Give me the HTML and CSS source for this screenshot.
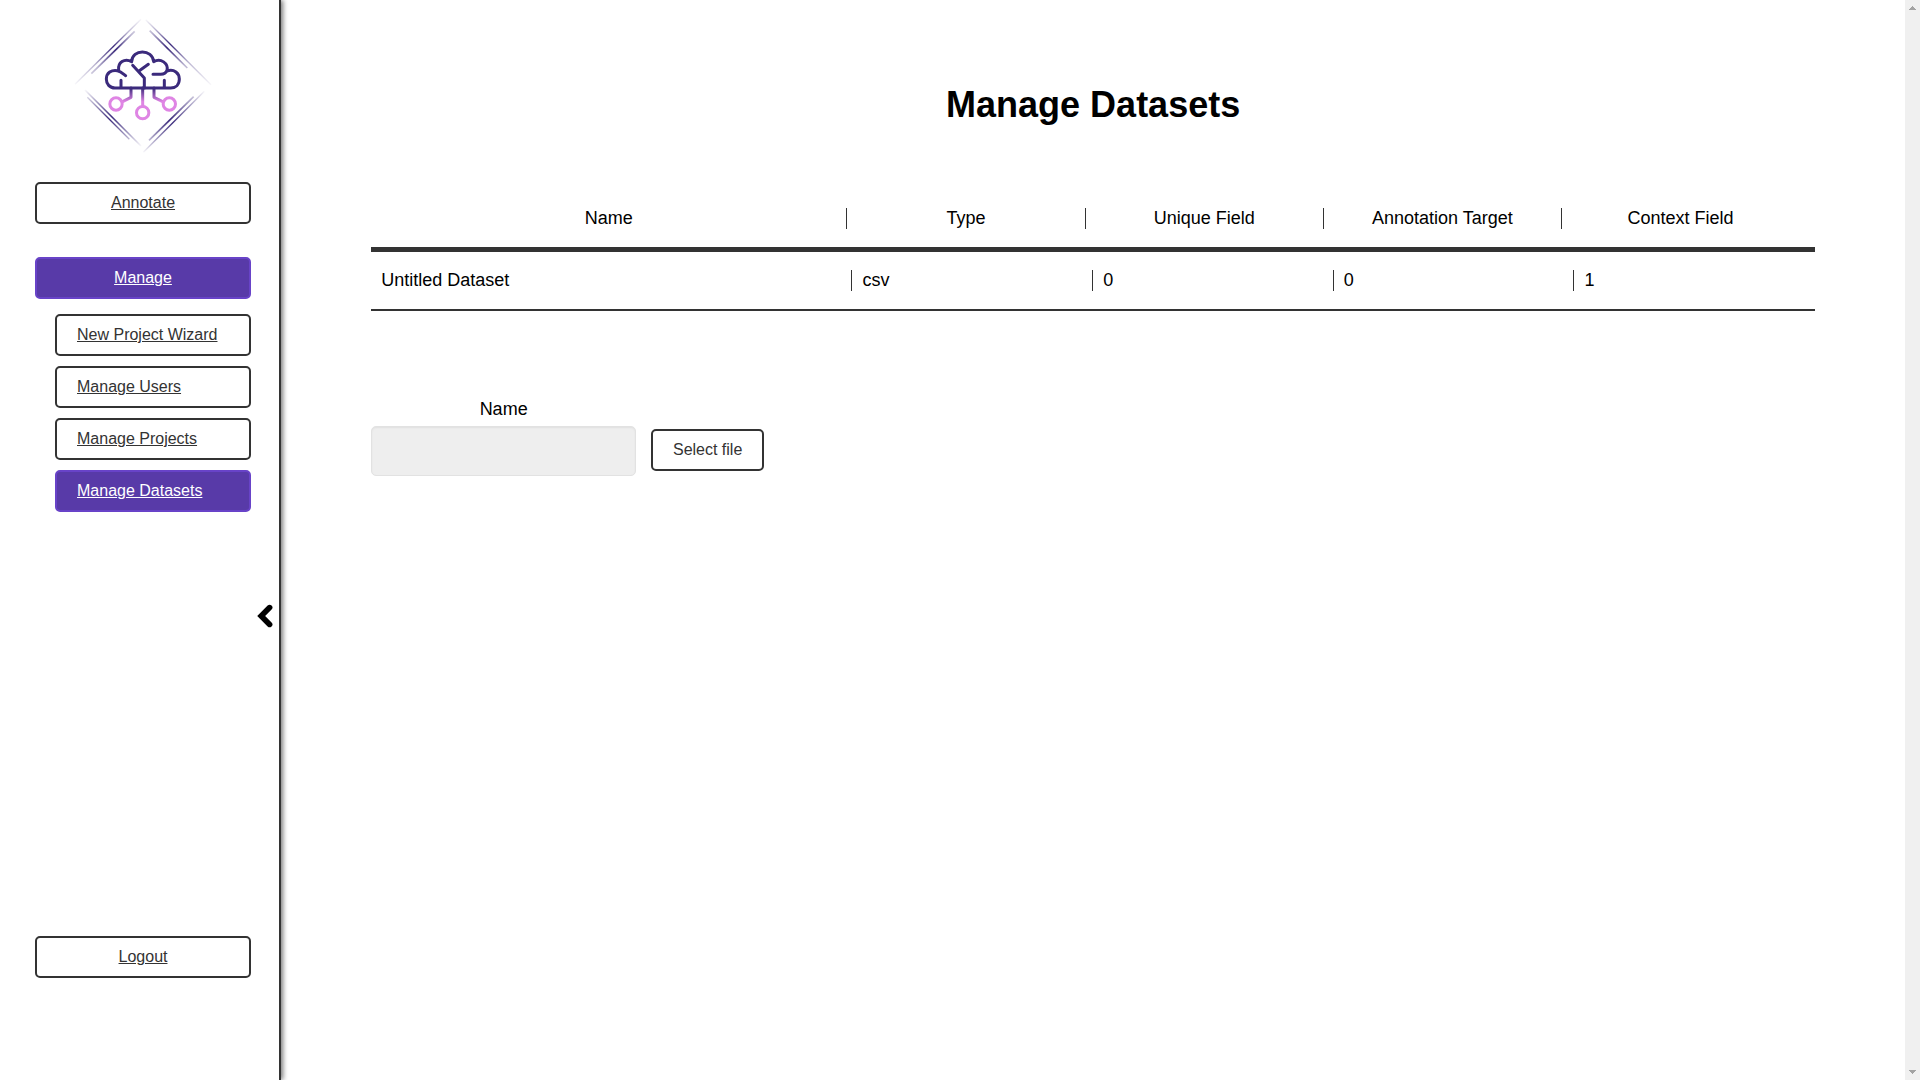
FILE: index.html
```html
<!DOCTYPE html>
<html lang="en">
<head>
<meta charset="utf-8">
<title>Manage Datasets</title>
<link rel="stylesheet" href="styles.css">
</head>
<body>
<div class="app">
  <aside class="sidebar">
    <svg class="logo" viewBox="0 0 510 450" fill="none" stroke-linecap="round" stroke-linejoin="round">
      <defs>
        <linearGradient id="up" gradientUnits="userSpaceOnUse" x1="45" y1="223" x2="243" y2="28"><stop offset="0" stop-color="#3b2a7c" stop-opacity=".04"/><stop offset=".3" stop-color="#3b2a7c" stop-opacity=".35"/><stop offset=".58" stop-color="#3b2a7c"/><stop offset=".8" stop-color="#3b2a7c" stop-opacity=".35"/><stop offset="1" stop-color="#3b2a7c" stop-opacity=".04"/></linearGradient>
        <linearGradient id="down" gradientUnits="userSpaceOnUse" x1="257" y1="29" x2="453" y2="224"><stop offset="0" stop-color="#3b2a7c" stop-opacity=".04"/><stop offset=".15" stop-color="#3b2a7c" stop-opacity=".35"/><stop offset=".38" stop-color="#3b2a7c"/><stop offset=".65" stop-color="#3b2a7c" stop-opacity=".35"/><stop offset="1" stop-color="#3b2a7c" stop-opacity=".04"/></linearGradient>
        <linearGradient id="low" gradientUnits="userSpaceOnUse" x1="75" y1="240" x2="243" y2="408"><stop offset="0" stop-color="#3b2a7c" stop-opacity=".04"/><stop offset=".48" stop-color="#3b2a7c"/><stop offset="1" stop-color="#3b2a7c" stop-opacity=".04"/></linearGradient>
        <linearGradient id="rise" gradientUnits="userSpaceOnUse" x1="250" y1="427" x2="433" y2="244"><stop offset="0" stop-color="#3b2a7c" stop-opacity=".04"/><stop offset=".48" stop-color="#3b2a7c"/><stop offset="1" stop-color="#3b2a7c" stop-opacity=".04"/></linearGradient>
        <linearGradient id="stem" gradientUnits="userSpaceOnUse" x1="0" y1="234" x2="0" y2="275"><stop offset="0" stop-color="#3b2a7c"/><stop offset="1" stop-color="#df85e4"/></linearGradient>
      </defs>
      <g stroke-width="4" stroke-linecap="butt">
        <path stroke="url(#up)" d="M45 223 243 28"/><path stroke="url(#up)" stroke-width="5" d="M94 191 224 64"/>
        <path stroke="url(#down)" d="M257 29 453 224"/><path stroke="url(#down)" stroke-width="5" d="M269 62 382 174"/>
        <path stroke="url(#low)" stroke-width="5" d="M75 240 243 408"/><path stroke="url(#low)" d="M82 262 208 388"/>
        <path stroke="url(#rise)" d="M250 427 433 244"/><path stroke="url(#rise)" stroke-width="5" d="M267 391 401 260"/>
      </g>
      <g stroke="url(#stem)" stroke-width="9">
        <path d="M213 234V262L188 275"/><path d="M248 234V286H249"/><path d="M282 234V262L308 275"/>
      </g>
      <g stroke="#df85e4" stroke-width="9">
        <circle cx="168" cy="282" r="18.500"/><circle cx="248" cy="308" r="18.500"/><circle cx="328" cy="282" r="18.500"/>
      </g>
      <g stroke="#3b2a7c" stroke-width="9">
        <path d="M165 234C149 234 139 222 139 207C139 188 155 179 172 182C183 184 190 192 197 197M176 180C173 158 193 143 215 155C216 116 278 116 281 155C302 143 326 160 321 181C318 190 311 193 302 193H279M321 183C343 176 358 190 358 207C358 224 347 234 332 234H165"/>
        <path d="M218 166 253 204V234M238 182 265 163M183 211V232M313 211V232"/>
      </g>
    </svg>
    <nav class="nav">
      <a class="btn" href="#">Annotate</a>
      <div class="group">
        <a class="btn active" href="#">Manage</a>
        <div class="subnav">
          <a class="btn sub" href="#">New Project Wizard</a>
          <a class="btn sub" href="#">Manage Users</a>
          <a class="btn sub" href="#">Manage Projects</a>
          <a class="btn sub active" href="#">Manage Datasets</a>
        </div>
      </div>
    </nav>
    <a class="btn logout" href="#">Logout</a>
    <svg class="collapse" viewBox="0 0 16 24"><path d="M12.600 3.600 4.200 12l8.400 8.400" fill="none" stroke="#000" stroke-width="5.600" stroke-linecap="round"/></svg>
  </aside>
  <main class="main">
    <h1 class="title">Manage Datasets</h1>
    <section class="table">
      <div class="row head">
        <div class="cell wide">Name</div><div class="cell">Type</div><div class="cell">Unique Field</div><div class="cell">Annotation Target</div><div class="cell">Context Field</div>
      </div>
      <div class="row data">
        <div class="cell wide">Untitled Dataset</div><div class="cell">csv</div><div class="cell">0</div><div class="cell">0</div><div class="cell">1</div>
      </div>
    </section>
    <form class="upload">
      <label class="field">Name<input class="input" type="text" disabled></label>
      <button class="btn file" type="button">Select file</button>
    </form>
  </main>
  <div class="scrollbar">
    <svg width="7" height="4" shape-rendering="crispEdges"><path d="M3 0h1v1h1v1h1v1h1v1H0V3h1V2h1V1h1z" fill="#a3a3a3"/></svg>
    <svg width="7" height="4" shape-rendering="crispEdges"><path d="M0 0h7v1H6v1H5v1H4v1H3V3H2V2H1V1H0z" fill="#a3a3a3"/></svg>
  </div>
</div>
</body>
</html>
```
FILE: styles.css
```css
* { box-sizing: border-box; }
body {
  margin: 0;
  font-family: "Liberation Sans", Arial, sans-serif;
  font-size: 18px;
  color: #000;
  background: #fff;
}
.app { display: flex; height: 100vh; overflow: hidden; }
.sidebar {
  position: relative;
  flex: none;
  display: flex;
  flex-direction: column;
  width: 281px;
  padding: 10px 28px 102px 35px;
  border-right: 2px solid #333;
  box-shadow: 2px 0 5px #787878;
}
.logo { width: 170px; height: 150px; margin: 0 0 22px 25px; flex: none; }
.nav { display: flex; flex-direction: column; gap: 33px; }
.btn {
  display: block;
  height: 42px;
  padding: 0 20px;
  border: 2px solid #333;
  border-radius: 5px;
  background: #fff;
  color: #333;
  font: 16px/38px "Liberation Sans", Arial, sans-serif;
  text-align: center;
}
.active { background: #583aa8; border-color: #6843c8; color: #fff; }
.subnav { display: flex; flex-direction: column; gap: 10px; padding: 15px 0 0 20px; }
.sub { text-align: left; }
.logout { margin-top: auto; }
.collapse { position: absolute; left: 257px; top: 604px; width: 16px; height: 24px; }
.main { flex: 1; padding: 84px 89.85px 0 90.15px; }
.title { margin: 0; font-size: 36px; line-height: 41px; text-align: center; }
.table { margin-top: 83px; }
.row { display: grid; grid-template-columns: 2fr repeat(4, 1fr); }
.cell { height: 21px; line-height: 20px; border-right: 1px solid #333; white-space: nowrap; }
.cell:last-child { border-right-color: transparent; }
.head { padding: 0 15px 18px 0; border-bottom: 5px solid #333; text-align: center; }
.data { padding: 18px 0; border-bottom: 2px solid #333; }
.data .cell { padding-left: 10px; }
.upload { display: flex; align-items: flex-end; gap: 15px; margin-top: 87px; }
.field { display: flex; flex-direction: column; gap: 6px; width: 265px; padding-top: 1px; line-height: 21px; text-align: center; }
.input {
  height: 50px;
  border: 1px solid #e2e2e2;
  border-radius: 5px;
  background: #eee;
  box-shadow: inset 0 1px 2px rgba(0, 0, 0, .06);
}
.file { width: 113px; margin: 0 0 5px; padding: 0; }
.scrollbar {
  flex: none;
  display: flex;
  flex-direction: column;
  justify-content: space-between;
  align-items: center;
  width: 15px;
  padding: 6px 0;
  background: #f0f0f0;
}
```
